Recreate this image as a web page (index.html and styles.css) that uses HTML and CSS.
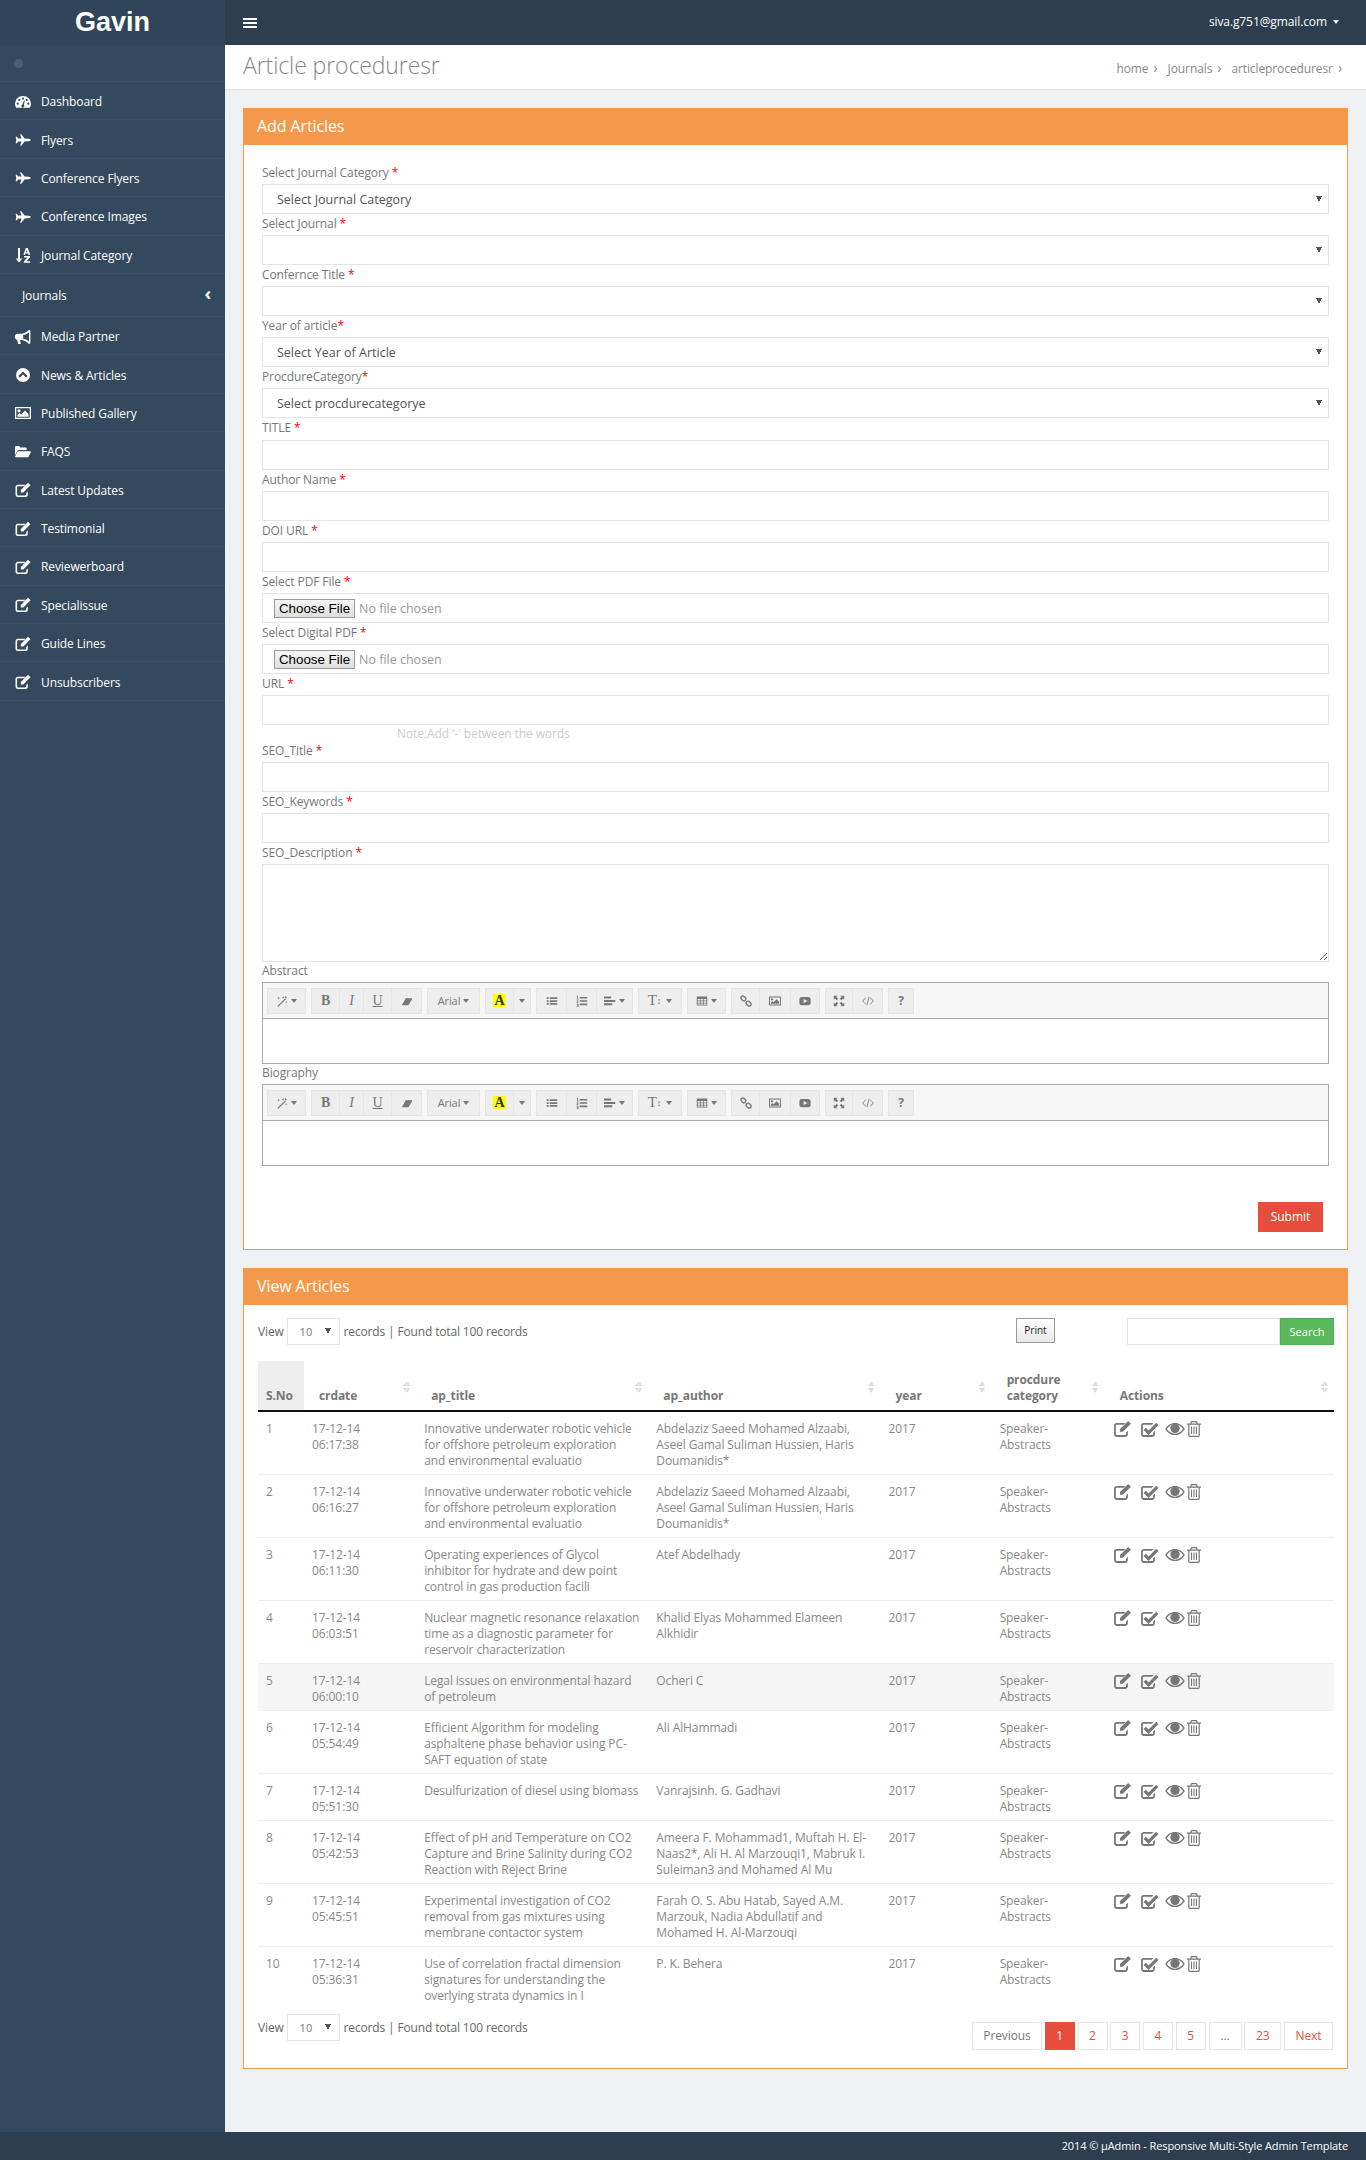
FILE: index.html
```html
<!DOCTYPE html>
<html lang="en">
<head>
    <meta charset="UTF-8">
    <meta name="viewport" content="width=device-width, initial-scale=1.0">
    <title>Gavin - Article proceduresr</title>
    <link rel="stylesheet" href="styles.css">
</head>
<body>

    <!-- Icon set -->
    <svg class="sprite" xmlns="http://www.w3.org/2000/svg">
        <symbol id="i-dash" viewBox="0 0 16 16"><path fill-rule="evenodd" d="M8 2a7.700 7.700 0 0 0-8 7.600c0 1.500.4 2.900 1.100 4.100h13.800c.7-1.200 1.100-2.600 1.100-4.100A7.700 7.700 0 0 0 8 2zM8 3.500a1.100 1.100 0 1 1 0 2.200 1.100 1.100 0 0 1 0-2.200zM4.300 5a1.100 1.100 0 1 1 0 2.200 1.100 1.100 0 0 1 0-2.200zM11.700 5a1.100 1.100 0 1 1 0 2.200 1.100 1.100 0 0 1 0-2.200zM2.700 8.600a1.100 1.100 0 1 1 0 2.200 1.100 1.100 0 0 1 0-2.200zM13.300 8.600a1.100 1.100 0 1 1 0 2.200 1.100 1.100 0 0 1 0-2.200zM9.200 6.200l.6.200-.9 4.400a1.500 1.500 0 1 1-1.400-.4z"/></symbol>
        <symbol id="i-plane" viewBox="0 0 16 16"><path d="M15.800 8c0-.5-1-1-2.400-1.200L9.500 6.500 6.300 2.200H5l1.500 4.300H3.100L1.900 4.800H.6l.7 3.200-.7 3.200h1.300l1.200-1.700h3.400L5 13.800h1.300l3.200-4.300 3.900-.3C14.800 9 15.800 8.500 15.800 8z"/></symbol>
        <symbol id="i-sort" viewBox="0 0 16 16"><path d="M3 1h2v10.500h2.400L4 15.500.6 11.500H3z"/><path d="M10.800 1h2l2.500 6.800h-1.800l-.4-1.300h-2.600l-.4 1.300H8.400zM11.800 2.900l-.9 2.400h1.700zM9 9h6v1.300l-3.600 4h3.700v1.500H8.800v-1.300l3.600-4H9z"/></symbol>
        <symbol id="i-horn" viewBox="0 0 16 16"><path fill-rule="evenodd" d="M14.200 1c-.4 0-.7.200-.9.500-1.500 1.500-4 3-6.600 3.300H2.400C1.100 4.800 0 5.900 0 7.200v1.300c0 1.200.9 2.200 2.100 2.400l1.100 4.200h2.600L5 11.100h1.700c2.600.3 5.100 1.800 6.600 3.300.2.300.5.500.9.500.7 0 1.200-.6 1.200-1.300V2.300c0-.7-.5-1.300-1.200-1.300zM14 3.400v9c-1.400-1.100-3.400-2.300-5.800-2.700V6.100C10.600 5.700 12.600 4.500 14 3.400z"/></symbol>
        <symbol id="i-news" viewBox="0 0 16 16"><path fill-rule="evenodd" d="M8 1a7 7 0 1 0 0 14A7 7 0 0 0 8 1zM8 4.400l4.600 4.600-1.500 1.500L8 7.400l-3.100 3.100L3.400 9z"/></symbol>
        <symbol id="i-pic" viewBox="0 0 16 16"><path fill-rule="evenodd" d="M0 2h16v12H0zM1.300 3.300v9.400h13.400V3.300zM4 4.200a1.600 1.600 0 1 1 0 3.200 1.600 1.600 0 0 1 0-3.200zM2.500 11.700V9.900l2-2 1.600 1.600 4-4 3.400 3.400v2.800z"/></symbol>
        <symbol id="i-folder" viewBox="0 0 16 16"><path d="M0 3.200C0 2.500.5 2 1.200 2h3l1 1.400h5.300c.7 0 1.200.5 1.200 1.200V6H4.200c-.8 0-1.500.4-1.900 1.100L0 11.300z"/><path d="M3.300 7.300h12c.5 0 .8.500.6 1l-2.200 4.300c-.2.400-.6.600-1 .6H.8c-.5 0-.8-.5-.6-1l2.200-4.300c.2-.4.500-.6.900-.6z"/></symbol>
        <symbol id="i-edit" viewBox="0 0 16 16"><path d="M12.800 9.500v3a2.500 2.500 0 0 1-2.500 2.500H3a2.500 2.500 0 0 1-2.500-2.500V5.200A2.500 2.500 0 0 1 3 2.700h7.500L9 4.300H3c-.5 0-.9.400-.9.900v7.300c0 .5.400.9.900.9h7.300c.5 0 .9-.4.9-.9v-1.400z"/><path d="M13 .8l2.500 2.500-7.200 7.200H5.800V8z"/></symbol>
        <symbol id="i-check" viewBox="0 0 16 16"><path d="M12.800 9.500v3a2.500 2.500 0 0 1-2.500 2.500H3a2.500 2.500 0 0 1-2.500-2.500V5.200A2.500 2.500 0 0 1 3 2.700h8.500L10 4.300H3c-.5 0-.9.400-.9.900v7.300c0 .5.400.9.900.9h7.300c.5 0 .9-.4.9-.9v-1.400z"/><path d="M14 2.500l2 2-8.800 8.800L2.700 8.800l2-2 2.500 2.500z"/></symbol>
        <symbol id="i-eye" viewBox="0 0 18 12"><path fill-rule="evenodd" d="M9 .5C5.200.5 2 2.700.2 6 2 9.300 5.200 11.500 9 11.500s7-2.200 8.800-5.500C16 2.700 12.800.5 9 .5zM9 1.800c3 0 5.600 1.700 7.300 4.200-1.700 2.500-4.300 4.200-7.300 4.200S3.400 8.500 1.700 6C3.400 3.500 6 1.800 9 1.800z"/><circle cx="9" cy="5.400" r="4.200"/></symbol>
        <symbol id="i-trash" viewBox="0 0 14 16"><path fill-rule="evenodd" d="M5 0h4c.7 0 1.200.5 1.400 1.200l.4 1.300H14v1.200h-1.200v10.500c0 1-.7 1.800-1.600 1.800H2.800c-.9 0-1.600-.8-1.600-1.800V3.700H0V2.500h3.200l.4-1.300C3.800.5 4.300 0 5 0zM4.500 2.500h5l-.3-1.100c0-.1-.1-.2-.2-.2H5c-.1 0-.2.1-.2.200zM2.400 3.700v10.500c0 .4.200.6.400.6h8.400c.2 0 .4-.2.400-.6V3.700zM4 5.500h1.100v7.500H4zM6.450 5.500h1.100v7.500h-1.100zM8.900 5.500H10v7.500H8.900z"/></symbol>
        <symbol id="i-magic" viewBox="0 0 16 16"><path d="M12 4.500l1.200 1.200L3 15.800 1.800 14.600z"/><path d="M9.500 1l.5 1.500L11.500 3 10 3.500 9.500 5 9 3.500 7.500 3 9 2.500zM3.500 2l.5 1.500L5.500 4 4 4.500 3.500 6 3 4.500 1.500 4 3 3.500zM13.500 8l.4 1.100 1.100.4-1.100.4-.4 1.100-.4-1.100-1.100-.4 1.100-.4zM12.700 1.500l1.800 1.800-1.300 1.300-1.800-1.800z"/></symbol>
        <symbol id="i-eraser" viewBox="0 0 16 16"><path d="M5 13.500H1L6 5h9l-4 7c-.3.500-.8 1.500-1.500 1.500z"/><path d="M6.500 4H15l-.6 1H6z"/></symbol>
        <symbol id="i-ul" viewBox="0 0 16 16"><path d="M1 3h2.500v2.300H1zM1 6.900h2.500v2.300H1zM1 10.800h2.500v2.300H1zM5 3h10v2.300H5zM5 6.900h10v2.300H5zM5 10.800h10v2.300H5z"/></symbol>
        <symbol id="i-ol" viewBox="0 0 16 16"><path d="M5 2.500h10v2.200H5zM5 6.900h10v2.200H5zM5 11.300h10v2.200H5zM1 1h1.500v4H3.400v1H.8V5h.7V2.200H1zM.8 7.400h2.500v1L2 10h1.400v1H.8v-1l1.300-1.600H.8zM.8 12h2.600v4H.8v-.9h1.500v-.7h-1v-.8h1v-.6H.8z"/></symbol>
        <symbol id="i-align" viewBox="0 0 16 16"><path d="M0 2h9.500v2.800H0zM0 6.500h15v2.800H0zM0 11h11v2.800H0z"/></symbol>
        <symbol id="i-table" viewBox="0 0 16 16"><path fill-rule="evenodd" d="M1 2h14v12H1zM2.200 5.300v2h3.300v-2zM6.500 5.300v2h3v-2zM10.500 5.300v2h3.300v-2zM2.200 8.300v2h3.300v-2zM6.500 8.300v2h3v-2zM10.500 8.300v2h3.300v-2zM2.200 11.300v1.600h3.300v-1.600zM6.500 11.300v1.600h3v-1.600zM10.500 11.300v1.600h3.300v-1.600z"/></symbol>
        <symbol id="i-link" viewBox="0 0 16 16"><g fill="none" stroke="currentColor" stroke-width="1.800"><rect x="2" y="1" width="5" height="7" rx="2.500" transform="rotate(-45 4.500 4.500)"/><rect x="9" y="8" width="5" height="7" rx="2.500" transform="rotate(-45 11.500 11.500)"/></g></symbol>
        <symbol id="i-yt" viewBox="0 0 16 16"><path fill-rule="evenodd" d="M3.500 2.500h9c1.700 0 3 1.300 3 3v5c0 1.700-1.300 3-3 3h-9a3 3 0 0 1-3-3v-5a3 3 0 0 1 3-3zM6.200 5.200v5.600L11.200 8z"/></symbol>
        <symbol id="i-full" viewBox="0 0 16 16"><path d="M1 1h5L4.500 2.500 7 5 5 7 2.500 4.500 1 6zM15 1v5l-1.500-1.500L11 7 9 5l2.500-2.500L10 1zM1 15v-5l1.500 1.500L5 9l2 2-2.500 2.500L6 15zM15 15h-5l1.500-1.500L9 11l2-2 2.500 2.500L15 10z"/></symbol>
        <symbol id="i-code" viewBox="0 0 16 16"><path fill="none" stroke="currentColor" stroke-width="1.100" d="M5 3.500L1 8l4 4.500M11 3.500L15 8l-4 4.500M9.300 2.500L6.700 13.500"/></symbol>
    </svg>

    <div class="wrapper">

        <!-- Sidebar -->
        <aside class="sidebar">
            <div class="logo">Gavin</div>
            <div class="user-row"><span class="user-dot"></span></div>
            <ul class="side-menu">
                <li><svg class="side-icon"><use href="#i-dash"/></svg>Dashboard</li>
                <li><svg class="side-icon"><use href="#i-plane"/></svg>Flyers</li>
                <li><svg class="side-icon"><use href="#i-plane"/></svg>Conference Flyers</li>
                <li><svg class="side-icon"><use href="#i-plane"/></svg>Conference Images</li>
                <li><svg class="side-icon"><use href="#i-sort"/></svg>Journal Category</li>
                <li class="side-sub"><span>Journals</span><span class="side-arrow">&#8249;</span></li>
                <li><svg class="side-icon"><use href="#i-horn"/></svg>Media Partner</li>
                <li><svg class="side-icon"><use href="#i-news"/></svg>News &amp; Articles</li>
                <li><svg class="side-icon"><use href="#i-pic"/></svg>Published Gallery</li>
                <li><svg class="side-icon"><use href="#i-folder"/></svg>FAQS</li>
                <li><svg class="side-icon"><use href="#i-edit"/></svg>Latest Updates</li>
                <li><svg class="side-icon"><use href="#i-edit"/></svg>Testimonial</li>
                <li><svg class="side-icon"><use href="#i-edit"/></svg>Reviewerboard</li>
                <li><svg class="side-icon"><use href="#i-edit"/></svg>Specialissue</li>
                <li><svg class="side-icon"><use href="#i-edit"/></svg>Guide Lines</li>
                <li><svg class="side-icon"><use href="#i-edit"/></svg>Unsubscribers</li>
            </ul>
        </aside>

        <div class="main">

            <!-- Top bar -->
            <header class="topbar">
                <span class="burger"><i></i><i></i><i></i></span>
                <span class="user-mail">siva.g751@gmail.com <b class="caret"></b></span>
            </header>

            <div class="page-title">
                <h1>Article proceduresr</h1>
                <div class="crumbs">
                    <span>home</span><em>&#8250;</em>
                    <span>Journals</span><em>&#8250;</em>
                    <span>articleproceduresr</span><em>&#8250;</em>
                </div>
            </div>

            <div class="content">

                <!-- Add form -->
                <section class="panel">
                    <h2 class="panel-head">Add Articles</h2>
                    <form class="add-form">
                        <label>Select Journal Category <u>*</u></label>
                        <select><option>Select Journal Category</option></select>
                        <label>Select Journal <u>*</u></label>
                        <select><option></option></select>
                        <label>Confernce Title <u>*</u></label>
                        <select><option></option></select>
                        <label>Year of article<u>*</u></label>
                        <select><option>Select Year of Article</option></select>
                        <label>ProcdureCategory<u>*</u></label>
                        <select><option>Select procdurecategorye</option></select>
                        <label>TITLE <u>*</u></label>
                        <input type="text">
                        <label>Author Name <u>*</u></label>
                        <input type="text">
                        <label>DOI URL <u>*</u></label>
                        <input type="text">
                        <label>Select PDF File <u>*</u></label>
                        <input type="file">
                        <label>Select Digital PDF <u>*</u></label>
                        <input type="file">
                        <label>URL <u>*</u></label>
                        <input type="text">
                        <p class="note">Note:Add '-' between the words</p>
                        <label>SEO_Title <u>*</u></label>
                        <input type="text">
                        <label>SEO_Keywords <u>*</u></label>
                        <input type="text">
                        <label>SEO_Description <u>*</u></label>
                        <textarea></textarea>

                        <label class="ed-label">Abstract</label>
                        <div class="editor">
                            <div class="ed-bar">
                                <span class="ed-group"><b class="w39"><svg class="ed-ico"><use href="#i-magic"/></svg><i class="dn"></i></b></span>
                                <span class="ed-group"><b class="w29 tb">B</b><b class="w25 ti">I</b><b class="w29 tu">U</b><b class="w31"><svg class="ed-ico"><use href="#i-eraser"/></svg></b></span>
                                <span class="ed-group"><b class="w53 ta">Arial<i class="dn"></i></b></span>
                                <span class="ed-group"><b class="w29"><span class="ta-color">A</span></b><b class="w18"><i class="dn"></i></b></span>
                                <span class="ed-group"><b class="w31"><svg class="ed-ico"><use href="#i-ul"/></svg></b><b class="w31"><svg class="ed-ico"><use href="#i-ol"/></svg></b><b class="w37"><svg class="ed-ico"><use href="#i-align"/></svg><i class="dn"></i></b></span>
                                <span class="ed-group"><b class="w44 th">T<small>&#8597;</small><i class="dn"></i></b></span>
                                <span class="ed-group"><b class="w39"><svg class="ed-ico"><use href="#i-table"/></svg><i class="dn"></i></b></span>
                                <span class="ed-group"><b class="w29"><svg class="ed-ico"><use href="#i-link"/></svg></b><b class="w32"><svg class="ed-ico"><use href="#i-pic"/></svg></b><b class="w30"><svg class="ed-ico"><use href="#i-yt"/></svg></b></span>
                                <span class="ed-group"><b class="w28"><svg class="ed-ico"><use href="#i-full"/></svg></b><b class="w31"><svg class="ed-ico"><use href="#i-code"/></svg></b></span>
                                <span class="ed-group"><b class="w26 tq">?</b></span>
                            </div>
                            <div class="ed-body"></div>
                        </div>

                        <label class="ed-label">Biography</label>
                        <div class="editor">
                            <div class="ed-bar">
                                <span class="ed-group"><b class="w39"><svg class="ed-ico"><use href="#i-magic"/></svg><i class="dn"></i></b></span>
                                <span class="ed-group"><b class="w29 tb">B</b><b class="w25 ti">I</b><b class="w29 tu">U</b><b class="w31"><svg class="ed-ico"><use href="#i-eraser"/></svg></b></span>
                                <span class="ed-group"><b class="w53 ta">Arial<i class="dn"></i></b></span>
                                <span class="ed-group"><b class="w29"><span class="ta-color">A</span></b><b class="w18"><i class="dn"></i></b></span>
                                <span class="ed-group"><b class="w31"><svg class="ed-ico"><use href="#i-ul"/></svg></b><b class="w31"><svg class="ed-ico"><use href="#i-ol"/></svg></b><b class="w37"><svg class="ed-ico"><use href="#i-align"/></svg><i class="dn"></i></b></span>
                                <span class="ed-group"><b class="w44 th">T<small>&#8597;</small><i class="dn"></i></b></span>
                                <span class="ed-group"><b class="w39"><svg class="ed-ico"><use href="#i-table"/></svg><i class="dn"></i></b></span>
                                <span class="ed-group"><b class="w29"><svg class="ed-ico"><use href="#i-link"/></svg></b><b class="w32"><svg class="ed-ico"><use href="#i-pic"/></svg></b><b class="w30"><svg class="ed-ico"><use href="#i-yt"/></svg></b></span>
                                <span class="ed-group"><b class="w28"><svg class="ed-ico"><use href="#i-full"/></svg></b><b class="w31"><svg class="ed-ico"><use href="#i-code"/></svg></b></span>
                                <span class="ed-group"><b class="w26 tq">?</b></span>
                            </div>
                            <div class="ed-body"></div>
                        </div>

                        <div class="form-actions"><button type="button" class="btn-submit">Submit</button></div>
                    </form>
                </section>

                <!-- Records table -->
                <section class="panel">
                    <h2 class="panel-head">View Articles</h2>
                    <div class="table-wrap">
                        <div class="tools">
                            <div class="records">View <select class="mini"><option>10</option></select> records | Found total 100 records</div>
                            <button type="button" class="btn-print">Print</button>
                            <div class="search"><input type="text"><button type="button">Search</button></div>
                        </div>

                        <table class="grid">
                            <colgroup>
                                <col class="c-no"><col class="c-date"><col class="c-title"><col class="c-author"><col class="c-year"><col class="c-cat"><col class="c-act">
                            </colgroup>
                            <thead>
                                <tr>
                                    <th class="th-no">S.No</th>
                                    <th class="sortable">crdate</th>
                                    <th class="sortable">ap_title</th>
                                    <th class="sortable">ap_author</th>
                                    <th class="sortable">year</th>
                                    <th class="sortable">procdure<br>category</th>
                                    <th class="sortable">Actions</th>
                                </tr>
                            </thead>
                            <tbody>
                                <tr>
                                    <td>1</td><td>17-12-14 06:17:38</td>
                                    <td>Innovative underwater robotic vehicle for offshore petroleum exploration<br>and environmental evaluatio</td>
                                    <td>Abdelaziz Saeed Mohamed Alzaabi, Aseel Gamal Suliman Hussien, Haris Doumanidis*</td>
                                    <td>2017</td><td>Speaker-Abstracts</td>
                                    <td class="acts"><svg class="a-edit"><use href="#i-edit"/></svg><svg class="a-check"><use href="#i-check"/></svg><svg class="a-eye"><use href="#i-eye"/></svg><svg class="a-trash"><use href="#i-trash"/></svg></td>
                                </tr>
                                <tr>
                                    <td>2</td><td>17-12-14 06:16:27</td>
                                    <td>Innovative underwater robotic vehicle for offshore petroleum exploration<br>and environmental evaluatio</td>
                                    <td>Abdelaziz Saeed Mohamed Alzaabi, Aseel Gamal Suliman Hussien, Haris Doumanidis*</td>
                                    <td>2017</td><td>Speaker-Abstracts</td>
                                    <td class="acts"><svg class="a-edit"><use href="#i-edit"/></svg><svg class="a-check"><use href="#i-check"/></svg><svg class="a-eye"><use href="#i-eye"/></svg><svg class="a-trash"><use href="#i-trash"/></svg></td>
                                </tr>
                                <tr>
                                    <td>3</td><td>17-12-14 06:11:30</td>
                                    <td>Operating experiences of Glycol inhibitor for hydrate and dew point control in gas production facili</td>
                                    <td>Atef Abdelhady</td>
                                    <td>2017</td><td>Speaker-Abstracts</td>
                                    <td class="acts"><svg class="a-edit"><use href="#i-edit"/></svg><svg class="a-check"><use href="#i-check"/></svg><svg class="a-eye"><use href="#i-eye"/></svg><svg class="a-trash"><use href="#i-trash"/></svg></td>
                                </tr>
                                <tr>
                                    <td>4</td><td>17-12-14 06:03:51</td>
                                    <td>Nuclear magnetic resonance relaxation time as a diagnostic parameter for reservoir characterization</td>
                                    <td>Khalid Elyas Mohammed Elameen Alkhidir</td>
                                    <td>2017</td><td>Speaker-Abstracts</td>
                                    <td class="acts"><svg class="a-edit"><use href="#i-edit"/></svg><svg class="a-check"><use href="#i-check"/></svg><svg class="a-eye"><use href="#i-eye"/></svg><svg class="a-trash"><use href="#i-trash"/></svg></td>
                                </tr>
                                <tr class="row-hover">
                                    <td>5</td><td>17-12-14 06:00:10</td>
                                    <td>Legal issues on environmental hazard of petroleum</td>
                                    <td>Ocheri C</td>
                                    <td>2017</td><td>Speaker-Abstracts</td>
                                    <td class="acts"><svg class="a-edit"><use href="#i-edit"/></svg><svg class="a-check"><use href="#i-check"/></svg><svg class="a-eye"><use href="#i-eye"/></svg><svg class="a-trash"><use href="#i-trash"/></svg></td>
                                </tr>
                                <tr>
                                    <td>6</td><td>17-12-14 05:54:49</td>
                                    <td>Efficient Algorithm for modeling asphaltene phase behavior using PC-SAFT equation of state</td>
                                    <td>Ali AlHammadi</td>
                                    <td>2017</td><td>Speaker-Abstracts</td>
                                    <td class="acts"><svg class="a-edit"><use href="#i-edit"/></svg><svg class="a-check"><use href="#i-check"/></svg><svg class="a-eye"><use href="#i-eye"/></svg><svg class="a-trash"><use href="#i-trash"/></svg></td>
                                </tr>
                                <tr>
                                    <td>7</td><td>17-12-14 05:51:30</td>
                                    <td>Desulfurization of diesel using biomass</td>
                                    <td>Vanrajsinh. G. Gadhavi</td>
                                    <td>2017</td><td>Speaker-Abstracts</td>
                                    <td class="acts"><svg class="a-edit"><use href="#i-edit"/></svg><svg class="a-check"><use href="#i-check"/></svg><svg class="a-eye"><use href="#i-eye"/></svg><svg class="a-trash"><use href="#i-trash"/></svg></td>
                                </tr>
                                <tr>
                                    <td>8</td><td>17-12-14 05:42:53</td>
                                    <td>Effect of pH and Temperature on CO2 Capture and Brine Salinity during CO2 Reaction with Reject Brine</td>
                                    <td>Ameera F. Mohammad1, Muftah H. El-Naas2*, Ali H. Al Marzouqi1, Mabruk I. Suleiman3 and Mohamed Al Mu</td>
                                    <td>2017</td><td>Speaker-Abstracts</td>
                                    <td class="acts"><svg class="a-edit"><use href="#i-edit"/></svg><svg class="a-check"><use href="#i-check"/></svg><svg class="a-eye"><use href="#i-eye"/></svg><svg class="a-trash"><use href="#i-trash"/></svg></td>
                                </tr>
                                <tr>
                                    <td>9</td><td>17-12-14 05:45:51</td>
                                    <td>Experimental investigation of CO2 removal from gas mixtures using membrane contactor system</td>
                                    <td>Farah O. S. Abu Hatab, Sayed A.M. Marzouk, Nadia Abdullatif and Mohamed H. Al-Marzouqi</td>
                                    <td>2017</td><td>Speaker-Abstracts</td>
                                    <td class="acts"><svg class="a-edit"><use href="#i-edit"/></svg><svg class="a-check"><use href="#i-check"/></svg><svg class="a-eye"><use href="#i-eye"/></svg><svg class="a-trash"><use href="#i-trash"/></svg></td>
                                </tr>
                                <tr class="last-row">
                                    <td>10</td><td>17-12-14 05:36:31</td>
                                    <td>Use of correlation fractal dimension signatures for understanding the overlying strata dynamics in I</td>
                                    <td>P. K. Behera</td>
                                    <td>2017</td><td>Speaker-Abstracts</td>
                                    <td class="acts"><svg class="a-edit"><use href="#i-edit"/></svg><svg class="a-check"><use href="#i-check"/></svg><svg class="a-eye"><use href="#i-eye"/></svg><svg class="a-trash"><use href="#i-trash"/></svg></td>
                                </tr>
                            </tbody>
                        </table>

                        <div class="table-foot">
                            <div class="records">View <select class="mini"><option>10</option></select> records | Found total 100 records</div>
                            <div class="pager">
                                <a class="p-prev">Previous</a>
                                <a class="p-on">1</a>
                                <a>2</a><a>3</a><a>4</a><a>5</a>
                                <a class="p-dots">...</a>
                                <a class="p-wide">23</a>
                                <a class="p-next">Next</a>
                            </div>
                        </div>
                    </div>
                </section>

            </div>
        </div>
    </div>

    <!-- Footer -->
    <footer class="site-foot">2014 &copy; &micro;Admin - Responsive Multi-Style Admin Template</footer>

</body>
</html>
```

FILE: styles.css
```css
body {
    font-family: "Open Sans", sans-serif;
    font-size: 12px;
    letter-spacing: -0.1px;
    margin: 0;
    padding: 0 0 15px;
    background-color: #fff;
    color: #777;
}

.sprite {
    display: none;
}

.wrapper {
    display: grid;
    grid-template-columns: 225px 1fr;
}

/* sidebar */
.sidebar {
    background-color: #34495e;
    color: #fff;
}

.logo {
    height: 45px;
    line-height: 44px;
    background-color: #31455a;
    font-family: "Liberation Sans", Arial, sans-serif;
    font-weight: bold;
    font-size: 27px;
    letter-spacing: 0;
    text-align: center;
}

.user-row {
    height: 37px;
    display: flex;
    align-items: center;
    padding-left: 14px;
    border-bottom: 1px solid #3a5068;
    box-sizing: border-box;
}

.user-dot {
    width: 9px;
    height: 9px;
    border-radius: 50%;
    background-color: #4a5f75;
}

.side-menu {
    list-style: none;
    margin: 0;
    padding: 0;
}

.side-menu li {
    height: 38.400px;
    box-sizing: border-box;
    display: flex;
    align-items: center;
    padding: 2px 0 0 15px;
    border-bottom: 1px solid #3a5068;
}

.side-menu .side-sub {
    height: 43px;
    padding: 2px 14px 0 22px;
    justify-content: space-between;
}

.side-arrow {
    font-size: 18px;
    font-weight: bold;
    position: relative;
    top: -3px;
}

.side-icon {
    width: 16px;
    height: 16px;
    fill: #fff;
    color: #fff;
    margin-right: 10px;
    flex: none;
}

/* top */
.main {
    background-color: #eff0f4;
    min-width: 0;
}

.topbar {
    height: 45px;
    background-color: #2c3e50;
    color: #fff;
    display: flex;
    justify-content: space-between;
    align-items: center;
    padding: 0 27px 2px 18px;
    box-sizing: border-box;
}

.burger {
    display: flex;
    flex-direction: column;
    gap: 2px;
    margin-top: 2px;
}

.burger i {
    display: block;
    width: 14px;
    height: 2px;
    background-color: #fff;
}

.caret {
    display: inline-block;
    border-top: 4px solid #fff;
    border-left: 3.500px solid transparent;
    border-right: 3.500px solid transparent;
    margin-left: 3px;
    vertical-align: 2px;
}

.page-title {
    height: 45px;
    background-color: #fff;
    border-bottom: 1px solid #e0e1e4;
    box-sizing: border-box;
    display: flex;
    justify-content: space-between;
    align-items: center;
    padding: 0 24px 0 18px;
}

.page-title h1 {
    margin: 0 0 4px;
    font-size: 23px;
    font-weight: 300;
    color: #888;
}

.crumbs {
    color: #888;
    display: flex;
    gap: 5px;
    margin-top: 2px;
}

.crumbs em {
    font-style: normal;
    font-size: 14px;
    line-height: 16px;
    margin-right: 5px;
}

.crumbs em:last-child {
    margin-right: 0;
}

.content {
    padding: 18px 18px 63px;
}

/* panels */
.panel {
    background-color: #fff;
    border: 1px solid #f39a4c;
    border-top: 0;
    margin-bottom: 18px;
}

.panel:last-child {
    margin-bottom: 0;
}

.panel-head {
    margin: 0 -1px;
    height: 37px;
    line-height: 36px;
    padding-left: 14px;
    background-color: #f4994b;
    color: #fff;
    font-size: 16px;
    font-weight: 400;
}

/* form */
.add-form {
    padding: 18px 18px 17px;
}

.add-form label {
    display: block;
    height: 21.100px;
    line-height: 19px;
    color: #777;
}

.add-form u {
    color: #f00;
    text-decoration: none;
}

.add-form select,
.add-form input,
.add-form textarea {
    display: block;
    width: 100%;
    height: 30px;
    box-sizing: border-box;
    border: 1px solid #e5e5e5;
    background-color: #fff;
    border-radius: 0;
    font-family: "Open Sans", sans-serif;
    font-size: 12.500px;
    letter-spacing: 0;
    color: #555;
    padding: 0 14px;
    margin: 0;
    outline: none;
}

/* native arrow replaced by a small solid triangle */
.add-form select,
.mini {
    appearance: none;
    background-image:
        linear-gradient(to top right, transparent 50%, #555 50%),
        linear-gradient(to top left, transparent 50%, #555 50%);
    background-repeat: no-repeat;
    background-size: 3px 6px, 3px 6px;
}

.add-form select {
    background-position: right 9px center, right 6px center;
}

.add-form textarea {
    height: 98px;
}

.add-form input[type="file"] {
    font-size: 12.500px;
    color: #999;
    padding: 5px 11px 0;
}

input[type="file"]::file-selector-button {
    font-family: "Liberation Sans", Arial, sans-serif;
    font-size: 13.333px;
    letter-spacing: 0;
    color: #000;
    height: 19px;
    width: 81px;
    padding: 0;
    margin-right: 4px;
    border: 1px solid #999;
    border-radius: 0;
    background: linear-gradient(#f6f6f6, #dedede);
}

.note {
    margin: 0;
    height: 15.500px;
    line-height: 17px;
    padding-left: 135px;
    color: #ccc;
}

.add-form .ed-label {
    height: 20px;
    line-height: 18px;
}

.editor {
    border: 1px solid #a9a9a9;
}

.ed-bar {
    height: 36px;
    background-color: #f7f7f7;
    border-bottom: 1px solid #a9a9a9;
    display: flex;
    gap: 5px;
    padding: 5px 0 0 4px;
    box-sizing: border-box;
}

.ed-group {
    display: flex;
    height: 26px;
}

.ed-group b {
    display: flex;
    align-items: center;
    justify-content: center;
    gap: 3px;
    height: 100%;
    box-sizing: border-box;
    border: 1px solid #e5e5e5;
    background-color: #eee;
    margin-left: -1px;
    font-weight: normal;
    color: #777;
}

.ed-group b:first-child {
    margin-left: 0;
}

.w18 { width: 18px; }
.w25 { width: 25px; }
.w26 { width: 26px; }
.w28 { width: 28px; }
.w29 { width: 29px; }
.w30 { width: 30px; }
.w31 { width: 31px; }
.w32 { width: 32px; }
.w37 { width: 37px; }
.w39 { width: 39px; }
.w44 { width: 44px; }
.w53 { width: 53px; }

.ed-ico {
    width: 12px;
    height: 12px;
    fill: #777;
    color: #777;
    flex: none;
}

.dn {
    display: inline-block;
    border-top: 4px solid #777;
    border-left: 3px solid transparent;
    border-right: 3px solid transparent;
}

.tb, .ti, .tu, .ta-color, .th {
    font-family: "Liberation Serif", "Times New Roman", serif;
    font-size: 14px;
}

.ed-group .tb {
    font-weight: bold;
}

.ed-group .ti {
    font-style: italic;
}

.ed-group .tu {
    text-decoration: underline;
}

.ed-group .ta {
    font-size: 11px;
}

.ed-group .th {
    font-size: 15px;
}

.th small {
    font-size: 9px;
    margin-left: -3px;
    margin-right: 2px;
}

.ed-group .tq {
    font-weight: bold;
}

.ta-color {
    background-color: #ff0;
    color: #333;
    font-weight: bold;
    line-height: 13px;
    padding: 0 1px;
}

.ed-body {
    height: 44px;
    background-color: #fff;
}

.form-actions {
    display: flex;
    justify-content: flex-end;
    margin-top: 36px;
    padding-right: 6px;
}

.btn-submit {
    width: 65px;
    height: 30px;
    border: 0;
    background-color: #e74c3c;
    color: #fff;
    font-family: "Open Sans", sans-serif;
    font-size: 12px;
}

/* table */
.table-wrap {
    padding: 13px 13px 18px 14px;
}

.tools {
    display: flex;
    align-items: flex-start;
    height: 43px;
}

.records {
    color: #666;
    letter-spacing: -0.15px;
    white-space: nowrap;
}

.mini {
    width: 53px;
    height: 27px;
    border: 1px solid #e5e5e5;
    background-color: #fff;
    background-position: right 11px center, right 8px center;
    border-radius: 0;
    font-family: "Open Sans", sans-serif;
    font-size: 11px;
    color: #777;
    padding-left: 12px;
    margin: 0 1px 0 0;
    outline: none;
}

.btn-print {
    margin-left: auto;
    width: 39px;
    height: 25px;
    padding: 0;
    border: 1px solid #999;
    border-radius: 0;
    background: linear-gradient(#fff, #e8e8e8);
    font-family: "Open Sans", sans-serif;
    font-size: 10px;
    color: #222;
}

.search {
    display: flex;
    margin-left: 72px;
}

.search input {
    width: 153px;
    height: 27px;
    box-sizing: border-box;
    border: 1px solid #e5e5e5;
    outline: none;
    padding: 0 6px;
}

.search button {
    width: 54px;
    height: 27px;
    border: 1px solid #53ad53;
    background-color: #5cb85c;
    color: #fff;
    font-family: "Open Sans", sans-serif;
    font-size: 11px;
    padding: 0;
}

.grid {
    width: 100%;
    border-collapse: collapse;
    table-layout: fixed;
}

.c-no { width: 46px; }
.c-date { width: 112px; }
.c-title { width: 232px; }
.c-author { width: 232px; }
.c-year { width: 111px; }
.c-cat { width: 113px; }
.c-act { width: 229px; }

.grid th {
    height: 50px;
    box-sizing: border-box;
    text-align: left;
    vertical-align: bottom;
    line-height: 16px;
    padding: 0 8px 6px 15px;
    color: #777;
    font-size: 12px;
    border-bottom: 2px solid #111;
    position: relative;
}

.grid .th-no {
    background-color: #eee;
    padding-left: 8px;
}

.sortable::after {
    content: "";
    position: absolute;
    right: 6px;
    top: 20px;
    width: 7px;
    height: 13px;
    background:
        linear-gradient(to bottom right, transparent 50%, #ddd 50%) left top / 50% 5px no-repeat,
        linear-gradient(to bottom left, transparent 50%, #ddd 50%) right top / 50% 5px no-repeat,
        linear-gradient(to top right, transparent 50%, #ddd 50%) left 7px / 50% 5px no-repeat,
        linear-gradient(to top left, transparent 50%, #ddd 50%) right 7px / 50% 5px no-repeat;
}

.grid td {
    vertical-align: top;
    padding: 9px 8px 5px;
    line-height: 16px;
    border-bottom: 1px solid #eee;
    color: #888;
}

.grid .row-hover td {
    background-color: #f5f5f5;
}

.grid .last-row td {
    border-bottom: 0;
}

.acts {
    white-space: nowrap;
}

.acts svg {
    fill: #777;
    color: #777;
    height: 18px;
    vertical-align: top;
    margin-top: -1px;
}

.a-edit {
    width: 19px;
    margin-right: 8px;
}

.a-check {
    width: 19px;
    margin-right: 6px;
}

.a-eye {
    width: 20px;
    margin-right: 2px;
}

.a-trash {
    width: 14px;
}

.table-foot {
    display: flex;
    justify-content: space-between;
    align-items: flex-start;
    margin-top: 13px;
}

.table-foot .records {
    margin-top: -8px;
}

.pager {
    display: flex;
    gap: 2.750px;
    margin-right: 1px;
}

.pager a {
    width: 30px;
    height: 28px;
    line-height: 26px;
    box-sizing: border-box;
    border: 1px solid #e5e5e5;
    background-color: #fff;
    color: #e74c3c;
    text-align: center;
}

.pager .p-prev {
    width: 70px;
    color: #777;
}

.pager .p-next {
    width: 49px;
}

.pager .p-wide {
    width: 37px;
}

.pager .p-dots {
    width: 33px;
    color: #777;
}

.pager .p-on {
    background-color: #e74c3c;
    border-color: #e74c3c;
    color: #fff;
}

.site-foot {
    height: 28px;
    line-height: 27px;
    background-color: #2c3e50;
    color: #fff;
    font-size: 11px;
    letter-spacing: -0.1px;
    text-align: right;
    padding-right: 18px;
}
```
